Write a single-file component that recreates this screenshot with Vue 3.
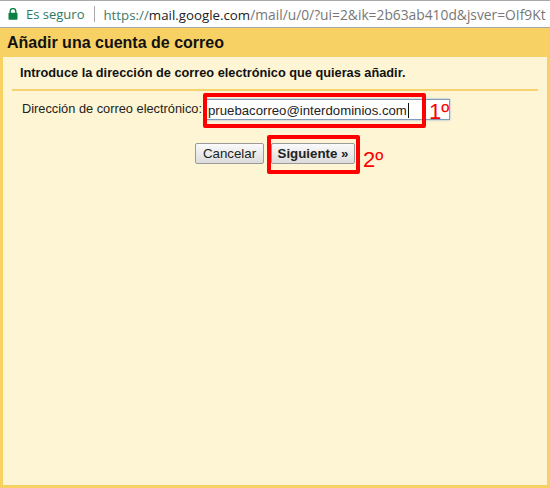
<script setup>
const email = "pruebacorreo@interdominios.com"
</script>

<template>
  <div class="page">
    <div class="address-bar">
      <svg class="lock" width="10" height="12" viewBox="0 0 10 12">
        <path d="M2.2 5V3.4a2.8 2.8 0 0 1 5.6 0V5" fill="none" stroke="#0b8043" stroke-width="1.3" />
        <rect x="0.5" y="4.8" width="9" height="7" rx="0.8" fill="#0b8043" />
      </svg>
      <span class="secure">Es seguro</span>
      <span class="divider"></span>
      <span class="url"><span class="scheme">https://</span>mail.google.com<span class="rest">/mail/u/0/?ui=2&amp;ik=2b63ab410d&amp;jsver=OIf9Kt</span></span>
    </div>

    <div class="dialog">
      <h1 class="title">Añadir una cuenta de correo</h1>
      <div class="body">
        <p class="intro">Introduce la dirección de correo electrónico que quieras añadir.</p>

        <div class="field">
          <label class="label">Dirección de correo electrónico:</label>
          <div class="input-wrap">
            <div class="input">{{ email }}<span class="caret"></span></div>
            <span class="mark mark-input"></span>
            <span class="note note-input">1º</span>
          </div>
        </div>

        <div class="actions">
          <button class="btn cancel">Cancelar</button>
          <div class="next-wrap">
            <button class="btn next">Siguiente »</button>
            <span class="mark mark-next"></span>
            <span class="note note-next">2º</span>
          </div>
        </div>
      </div>
    </div>
  </div>
</template>

<style scoped>
.page {
  width: 550px;
  height: 488px;
  display: flex;
  flex-direction: column;
  overflow: hidden;
  font-family: "Liberation Sans", Arial, sans-serif;
}

.address-bar {
  height: 26px;
  flex: none;
  display: flex;
  align-items: center;
  padding-left: 8px;
  background: #fff;
  border-top: 1px solid #a9a9a9;
  border-bottom: 1px solid #a9a9a9;
  font-family: "Open Sans", sans-serif;
  font-size: 13px;
  white-space: nowrap;
  overflow: hidden;
}

.lock {
  flex: none;
}

.secure {
  margin-left: 8px;
  color: #2d7a5f;
}

.divider {
  width: 1px;
  height: 16px;
  margin: 0 8px 0 10px;
  background: #a8a8a8;
  flex: none;
}

.url {
  color: #222;
  font-size: 13.3px;
}

.scheme {
  color: #3f7c68;
}

.rest {
  color: #777;
  font-size: 13.8px;
}

.dialog {
  flex: 1;
  display: flex;
  flex-direction: column;
  padding: 0 3px 3px;
  background: #f8d165;
}

.title {
  height: 29px;
  margin: 0;
  padding-left: 4px;
  font-size: 16px;
  line-height: 29px;
  font-weight: bold;
  color: #111;
}

.body {
  flex: 1;
  padding: 0 9px;
  background: #fdf5d3;
}

.intro {
  margin: 0;
  height: 32px;
  padding-left: 8px;
  border-bottom: 2px solid #f6d271;
  font-size: 12.76px;
  line-height: 31px;
  font-weight: bold;
  color: #111;
}

.field {
  display: flex;
  margin-top: 8px;
  padding-left: 10px;
}

.label {
  width: 183px;
  font-size: 12.8px;
  line-height: 20px;
  color: #222;
}

.input-wrap {
  position: relative;
}

.input {
  width: 241px;
  height: 19px;
  padding-left: 2px;
  border: 1px solid #7f9db9;
  box-shadow: 0 0 2px #8fb4e8;
  background: #fff;
  font-size: 13.2px;
  line-height: 21px;
  color: #222;
  box-sizing: content-box;
}

.caret {
  display: inline-block;
  width: 1px;
  height: 15px;
  margin-left: 1px;
  vertical-align: -3px;
  background: #111;
}

.actions {
  display: flex;
  justify-content: flex-start;
  gap: 7px;
  margin-top: 23px;
  padding-left: 183px;
}

.next-wrap {
  position: relative;
}

.btn {
  display: block;
  height: 21px;
  padding: 0;
  border: 1px solid #9a9a9a;
  border-radius: 2px;
  background: linear-gradient(#fafafa, #dcdcdc);
  font-family: "Liberation Sans", Arial, sans-serif;
  font-size: 13.3px;
  color: #222;
}

.cancel {
  width: 69px;
}

.next {
  width: 84px;
  font-weight: bold;
}

.mark {
  position: absolute;
  border: 4px solid #f00;
  border-radius: 2px;
  box-sizing: border-box;
}

.mark-input {
  left: -2px;
  top: -6px;
  width: 223px;
  height: 35px;
}

.mark-next {
  left: -4px;
  top: -8px;
  width: 93px;
  height: 39px;
}

.note {
  position: absolute;
  font-size: 22px;
  line-height: 26px;
  color: #f00;
}

.note-input {
  left: 224px;
  top: 0;
}

.note-next {
  left: 92px;
  top: 4px;
}
</style>

<style>
html,
body {
  margin: 0;
  background: #fdf5d3;
}
</style>
